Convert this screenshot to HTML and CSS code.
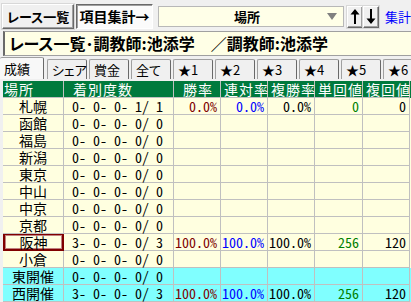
FILE: index.html
```html
<!DOCTYPE html>
<html lang="ja">
<head>
  <meta charset="UTF-8">
  <title>レース一覧・項目集計</title>
  <link rel="stylesheet" href="styles.css">
</head>
<body>
  <div class="toolbar">
    <button class="btn btn-list">レース一覧</button>
    <button class="btn btn-sum pressed">項目集計→</button>
    <div class="combo">
      <span class="combo-text">場所</span>
      <span class="combo-arrow"></span>
    </div>
    <button class="btn btn-arrow" title="上へ">
      <svg width="10" height="17" viewBox="0 0 10 17"><path d="M5 1 L9.5 6.5 H6 V16 H4 V6.5 H0.5 Z" fill="#000"/></svg>
    </button>
    <button class="btn btn-arrow" title="下へ">
      <svg width="10" height="17" viewBox="0 0 10 17"><path d="M5 16 L9.5 10.5 H6 V1 H4 V10.5 H0.5 Z" fill="#000"/></svg>
    </button>
    <a class="link" href="#">集計</a>
  </div>

  <div class="title-box">レース一覧･調教師:池添学　／調教師:池添学</div>

  <div class="tabs">
    <div class="tab active">成績</div>
    <div class="tab">シェア</div>
    <div class="tab">賞金</div>
    <div class="tab">全て</div>
    <div class="tab">★1</div>
    <div class="tab">★2</div>
    <div class="tab">★3</div>
    <div class="tab">★4</div>
    <div class="tab">★5</div>
    <div class="tab">★6</div>
  </div>

  <div class="grid-table">
    <div class="row head">
      <div class="c c-place">場所</div>
      <div class="c c-count">着別度数</div>
      <div class="c c-win">勝率</div>
      <div class="c">連対率</div>
      <div class="c">複勝率</div>
      <div class="c">単回値</div>
      <div class="c">複回値</div>
    </div>
    <div class="row">
      <div class="c place">札幌</div>
      <div class="c num count">0- 0- 0- 1/ 1</div>
      <div class="c num red">0.0%</div>
      <div class="c num blue">0.0%</div>
      <div class="c num">0.0%</div>
      <div class="c num green">0</div>
      <div class="c num">0</div>
    </div>
    <div class="row">
      <div class="c place">函館</div>
      <div class="c num count">0- 0- 0- 0/ 0</div>
      <div class="c"></div><div class="c"></div><div class="c"></div><div class="c"></div><div class="c"></div>
    </div>
    <div class="row">
      <div class="c place">福島</div>
      <div class="c num count">0- 0- 0- 0/ 0</div>
      <div class="c"></div><div class="c"></div><div class="c"></div><div class="c"></div><div class="c"></div>
    </div>
    <div class="row">
      <div class="c place">新潟</div>
      <div class="c num count">0- 0- 0- 0/ 0</div>
      <div class="c"></div><div class="c"></div><div class="c"></div><div class="c"></div><div class="c"></div>
    </div>
    <div class="row">
      <div class="c place">東京</div>
      <div class="c num count">0- 0- 0- 0/ 0</div>
      <div class="c"></div><div class="c"></div><div class="c"></div><div class="c"></div><div class="c"></div>
    </div>
    <div class="row">
      <div class="c place">中山</div>
      <div class="c num count">0- 0- 0- 0/ 0</div>
      <div class="c"></div><div class="c"></div><div class="c"></div><div class="c"></div><div class="c"></div>
    </div>
    <div class="row">
      <div class="c place">中京</div>
      <div class="c num count">0- 0- 0- 0/ 0</div>
      <div class="c"></div><div class="c"></div><div class="c"></div><div class="c"></div><div class="c"></div>
    </div>
    <div class="row">
      <div class="c place">京都</div>
      <div class="c num count">0- 0- 0- 0/ 0</div>
      <div class="c"></div><div class="c"></div><div class="c"></div><div class="c"></div><div class="c"></div>
    </div>
    <div class="row">
      <div class="c place selected">阪神</div>
      <div class="c num count">3- 0- 0- 0/ 3</div>
      <div class="c num red">100.0%</div>
      <div class="c num blue">100.0%</div>
      <div class="c num">100.0%</div>
      <div class="c num green">256</div>
      <div class="c num">120</div>
    </div>
    <div class="row">
      <div class="c place">小倉</div>
      <div class="c num count">0- 0- 0- 0/ 0</div>
      <div class="c"></div><div class="c"></div><div class="c"></div><div class="c"></div><div class="c"></div>
    </div>
    <div class="row cyan">
      <div class="c place">東開催</div>
      <div class="c num count">0- 0- 0- 0/ 0</div>
      <div class="c"></div><div class="c"></div><div class="c"></div><div class="c"></div><div class="c"></div>
    </div>
    <div class="row cyan">
      <div class="c place">西開催</div>
      <div class="c num count">3- 0- 0- 0/ 3</div>
      <div class="c num red">100.0%</div>
      <div class="c num blue">100.0%</div>
      <div class="c num">100.0%</div>
      <div class="c num green">256</div>
      <div class="c num">120</div>
    </div>
  </div>
</body>
</html>
```

FILE: styles.css
```css
body {
  margin: 0;
  background-color: #f0f0f0;
  font-family: "Noto Sans CJK JP", sans-serif;
  color: #000;
  overflow: hidden;
}
.toolbar {
  display: flex;
  align-items: center;
  height: 25px;
  padding: 4px 0 0 2px;
}
.btn {
  box-sizing: border-box;
  height: 25px;
  margin: 0;
  padding: 0;
  font-family: inherit;
  font-size: 14px;
  font-weight: bold;
  font-feature-settings: "palt";
  color: #000;
  background-color: #f0f0f0;
  border: 1px solid;
  border-color: #ffffff #696969 #696969 #ffffff;
  box-shadow: inset -1px -1px 0 #a0a0a0, 0 0 0 1px #d8d8d8;
  line-height: 21px;
  white-space: nowrap;
}
.btn-list {
  width: 73px;
  font-size: 13px;
}
.btn-sum {
  width: 77px;
  margin-left: 2px;
}
.pressed {
  background-color: #fbfbfb;
  border-color: #696969 #ffffff #ffffff #696969;
  box-shadow: inset 1px 1px 0 #a0a0a0;
}
.combo {
  box-sizing: border-box;
  display: flex;
  align-items: center;
  width: 188px;
  height: 21px;
  margin-left: 5px;
  background-color: #ffffe8;
  border: 1px solid #b8b8b8;
}
.combo-text {
  flex: 1;
  text-align: center;
  font-size: 13px;
  font-weight: bold;
  padding-left: 8px;
}
.combo-arrow {
  width: 0;
  height: 0;
  margin-right: 6px;
  border-left: 5px solid transparent;
  border-right: 5px solid transparent;
  border-top: 7px solid #808080;
}
.btn-arrow {
  display: flex;
  align-items: center;
  justify-content: center;
  width: 16px;
  height: 22px;
  margin-left: 3px;
}
.btn-arrow + .btn-arrow {
  margin-left: 0;
}
.link {
  margin-left: 6px;
  font-size: 13px;
  color: #0000ff;
  text-decoration: none;
  white-space: nowrap;
}
.title-box {
  box-sizing: border-box;
  height: 25px;
  margin: 2px 0 0 3px;
  padding-left: 4px;
  background-color: #ffffe6;
  border-top: 1px solid #a0a0a0;
  border-left: 2px solid #696969;
  border-bottom: 1px solid #a0a0a0;
  font-size: 16px;
  font-weight: bold;
  font-feature-settings: "palt";
  line-height: 23px;
  white-space: nowrap;
}
.tabs {
  display: flex;
  align-items: flex-end;
  gap: 2px;
  height: 22px;
  margin-top: 1px;
}
.tab {
  box-sizing: border-box;
  flex: none;
  width: 40px;
  height: 20px;
  padding-left: 4px;
  font-size: 13px;
  line-height: 19px;
  font-feature-settings: "palt";
  background-color: #f0f0f0;
  border: 1px solid #a0a0a0;
  border-bottom: none;
  border-right-color: #696969;
  border-radius: 2px 2px 0 0;
  white-space: nowrap;
}
.tab.active {
  width: 44px;
  height: 22px;
  margin-right: 1px;
  background-color: #f8f8f8;
  border-left: none;
  line-height: 22px;
}
.grid-table {
  margin: 2px 0 0 3px;
}
.row {
  display: grid;
  grid-template-columns: 61px 110px 47px 47px 47px 48px 47px;
  background-color: #ffffe0;
}
.row.cyan {
  background-color: #80ffff;
}
.row.head {
  background-color: #007a3d;
  color: #ffffff;
}
.c {
  box-sizing: border-box;
  height: 17px;
  border-right: 1px solid #c0c0c0;
  border-bottom: 1px solid #c0c0c0;
  font-size: 14px;
  line-height: 16px;
  white-space: pre;
}
.head .c {
  padding-left: 3px;
  letter-spacing: 1px;
}
.head .c-place {
  padding-left: 1px;
}
.head .c-count,
.head .c-win {
  padding-left: 9px;
}
.place {
  text-align: center;
}
.selected {
  box-shadow: inset 0 0 0 1px #800000, inset 0 0 0 2px #c08080;
  border-color: #800000;
  border-left: 1px solid #800000;
}
.num {
  text-align: right;
  padding-right: 3px;
  font-feature-settings: "hwid";
}
.count {
  text-align: left;
  padding-left: 8px;
}
.red {
  color: #800000;
}
.blue {
  color: #0000ff;
}
.green {
  color: #008000;
}
```
